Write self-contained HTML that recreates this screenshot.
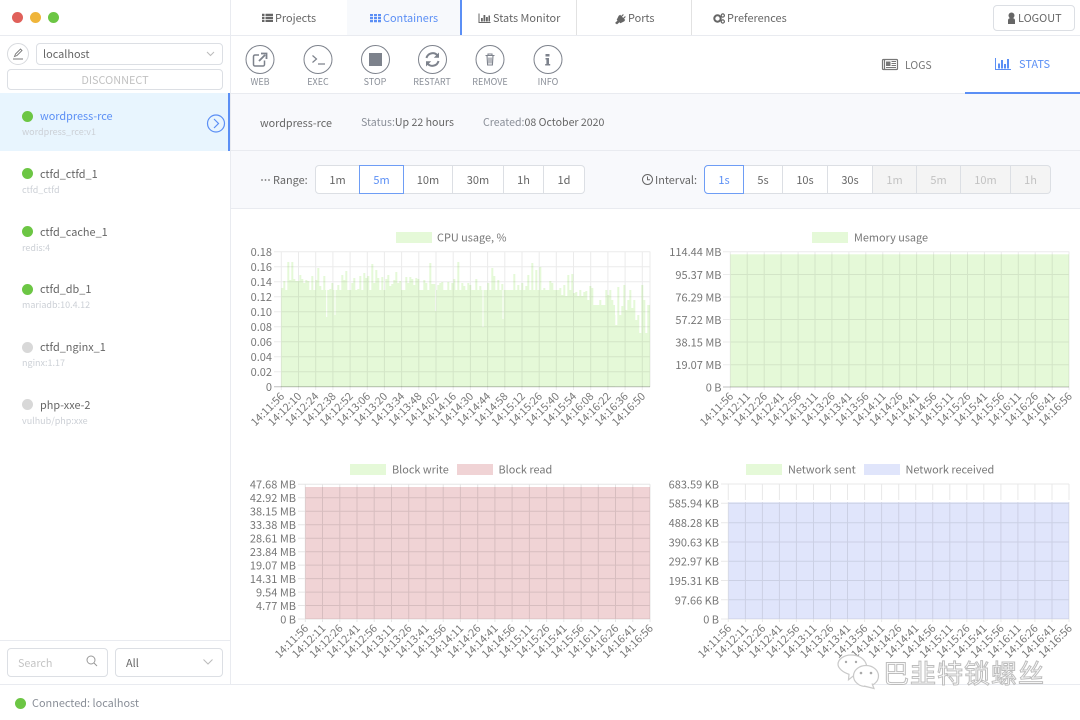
<!DOCTYPE html>
<html lang="en"><head><meta charset="utf-8"><title>Containers</title>
<style>
*{box-sizing:border-box}
html,body{margin:0;padding:0;width:1080px;height:720px;overflow:hidden;background:#fff}
body{position:relative;font-family:"Noto Sans CJK SC","Liberation Sans",sans-serif;color:#666;font-size:10.9px}
.a{position:absolute}
.t{position:absolute;white-space:nowrap;line-height:20px}
.c{text-align:center}
.l{position:absolute;background:#e9ebf0}
.dot{position:absolute;width:11px;height:11px;border-radius:50%;background:#6cc644}
.off{background:#d8d8d8}
.sub{color:#ccd0d6;font-size:9px}
.nm{color:#666;font-size:10.9px}
.tb{color:#8a8f98;font-size:9px;text-align:center;width:60px}
.box{position:absolute;border:1px solid #dcdfe4;border-radius:4px;background:#fff}
.seg{position:absolute;top:165px;height:29px;background:#fff;border:1px solid #dcdfe4;border-left-width:0;text-align:center;line-height:28px;font-size:11px;color:#666}
.dis{background:#f4f4f4;color:#c2c2c2}
.sel{border:1px solid #6e9df5;color:#5b8ff5;z-index:2}
svg text{font-family:"Noto Sans CJK SC","Liberation Sans",sans-serif}
.y text,.y{font-size:11px;fill:#777;text-anchor:end}
.x text{font-size:10.8px;fill:#777;text-anchor:end}
.lg{font-size:10.9px;fill:#777}
</style></head><body>

<!-- backgrounds -->
<div class="a" style="left:231px;top:94px;width:849px;height:115px;background:#f8f9fc"></div>
<div class="a" style="left:347px;top:0;width:114px;height:35px;background:#f7f9fc"></div>
<div class="a" style="left:0;top:93px;width:230px;height:58px;background:#e8f5fe"></div>
<div class="l" style="left:230px;top:0;width:1px;height:684px"></div>
<div class="l" style="left:0;top:35px;width:1080px;height:1px"></div>
<div class="l" style="left:231px;top:93px;width:849px;height:1px"></div>
<div class="l" style="left:231px;top:150px;width:849px;height:1px"></div>
<div class="l" style="left:231px;top:208px;width:849px;height:1px"></div>
<div class="l" style="left:0;top:640px;width:230px;height:1px"></div>
<div class="l" style="left:0;top:684px;width:1080px;height:1px"></div>
<div class="a" style="left:228px;top:93px;width:2px;height:58px;background:#5b8ff5"></div>
<div class="a" style="left:460px;top:0;width:2px;height:35px;background:#5b8ff5"></div>
<div class="a" style="left:576px;top:0;width:1px;height:35px;background:#e2e2e2"></div>
<div class="a" style="left:691px;top:0;width:1px;height:35px;background:#e2e2e2"></div>
<div class="a" style="left:965px;top:92px;width:115px;height:2px;background:#5b8ff5"></div>

<!-- traffic lights -->
<div class="a" style="left:12px;top:12px;width:11px;height:11px;border-radius:50%;background:#e0605a"></div>
<div class="a" style="left:30px;top:12px;width:11px;height:11px;border-radius:50%;background:#efb53a"></div>
<div class="a" style="left:48px;top:12px;width:11px;height:11px;border-radius:50%;background:#6cc644"></div>

<!-- nav -->
<svg class="a" style="left:0;top:0" width="1080" height="94" fill="#666">
<path d="M262 14h2.500v2.200h-2.500zM262 17h2.500v2.200h-2.500zM262 20h2.500v2.200h-2.500zM265.500 14h7.500v2.200h-7.500zM265.500 17h7.500v2.200h-7.500zM265.500 20h7.500v2.200h-7.500z" transform="translate(0,-.2)"/>
<path fill="#5b8ff5" d="M370 14h3v2.200h-3zM374 14h3v2.200h-3zM378 14h3v2.200h-3zM370 17h3v2.200h-3zM374 17h3v2.200h-3zM378 17h3v2.200h-3zM370 20h3v2.200h-3zM374 20h3v2.200h-3zM378 20h3v2.200h-3z"/>
<path d="M478.500 13.500h1v8.500h11v1h-12zM481 18h1.800v3.500h-1.800zM483.500 15h1.800v6.500h-1.800zM486 17h1.800v4.500h-1.800zM488.500 15.500h1.500v6h-1.500z"/>
<path d="M615 23l2.500-2.500-.8-.8 2-4 1.500-1 1 1.200 1.800-1.800.8.800-1.800 1.800 1.200 1.200 1.800-1.800.8.800-1.800 1.800 1.200 1.200-1 1.500-3.800 1.800-1-1-2.400 2.200z"/>
<circle cx="717.500" cy="18.500" r="3.200" fill="none" stroke="#666" stroke-width="2"/>
<circle cx="722.800" cy="15.500" r="1.600" fill="none" stroke="#666" stroke-width="1.200"/>
<circle cx="722.800" cy="21.500" r="1.600" fill="none" stroke="#666" stroke-width="1.200"/>
<circle cx="1011.500" cy="15.500" r="3"/>
<path d="M1008 24v-3.500c0-2 1.500-2.500 3.500-2.500s3.500.5 3.500 2.500V24z"/>

<!-- LOGS / STATS icons -->
<g fill="none" stroke="#777" stroke-width="1.200"><rect x="882.500" y="59.500" width="15" height="10" rx="1"/><path d="M884.500 59.500v10"/></g>
<rect x="886" y="61.500" width="4.500" height="4.500" fill="#777"/>
<path d="M891.500 61.500h4.500M891.500 63.500h4.500M891.500 65.500h4.500M886 67.500h10" stroke="#777" stroke-width="1"/>
<path fill="#5b8ff5" d="M995 58h1v11h15v1h-16zM998 63.500h2v5h-2zM1001 60h2v8.500h-2zM1004 64h2v4.500h-2zM1007 59h2v9.500h-2z"/>
</svg>
<div class="t" style="left:275px;top:8px">Projects</div>
<div class="t" style="left:383px;top:8px;color:#5b8ff5">Containers</div>
<div class="t" style="left:493px;top:8px">Stats Monitor</div>
<div class="t" style="left:628px;top:8px">Ports</div>
<div class="t" style="left:727px;top:8px">Preferences</div>
<div class="box" style="left:993px;top:5px;width:82px;height:26px;background:none"></div>
<div class="t" style="left:1018px;top:8px">LOGOUT</div>
<div class="t" style="left:905px;top:56px;font-size:10.500px;color:#777">LOGS</div>
<div class="t" style="left:1019px;top:54px;font-size:11px;color:#5b8ff5">STATS</div>

<!-- sidebar top -->
<svg class="a" style="left:0;top:40px" width="230" height="30" fill="none">
<circle cx="18" cy="14" r="10.500" stroke="#d8dade"/>
<path d="M14.500 16.500l1-2.500 5-5 1.500 1.500-5 5z" fill="none" stroke="#777" stroke-width=".9"/>
<path d="M13 19h10" stroke="#777"/>
<path d="M207 12l3.500 3.500L214 12" stroke="#bbb"/>
</svg>
<div class="box" style="left:36px;top:43px;width:187px;height:22px;background:none"></div>
<div class="t" style="left:43px;top:44px">localhost</div>
<div class="box" style="left:7px;top:69px;width:216px;height:21px"></div>
<div class="t c" style="left:7px;top:70px;width:216px;font-size:10.900px;color:#c2c2c2">DISCONNECT</div>

<!-- rows -->
<div class="dot" style="left:22px;top:111px"></div>
<div class="t nm" style="left:40px;top:106px;color:#5b8ff5">wordpress-rce</div>
<div class="t sub" style="left:22px;top:122px">wordpress_rce:v1</div>
<svg class="a" style="left:206px;top:114px" width="20" height="20" fill="none" stroke="#5b8ff5"><circle cx="10" cy="9.500" r="8.500" stroke-width="1.200"/><path d="M8 5l4.500 4.500L8 14" stroke-width="1.200"/></svg>

<div class="dot" style="left:22px;top:168px"></div>
<div class="t nm" style="left:40px;top:164px">ctfd_ctfd_1</div>
<div class="t sub" style="left:22px;top:180px">ctfd_ctfd</div>
<div class="dot" style="left:22px;top:226px"></div>
<div class="t nm" style="left:40px;top:222px">ctfd_cache_1</div>
<div class="t sub" style="left:22px;top:238px">redis:4</div>
<div class="dot" style="left:22px;top:284px"></div>
<div class="t nm" style="left:40px;top:279px">ctfd_db_1</div>
<div class="t sub" style="left:22px;top:295px">mariadb:10.4.12</div>
<div class="dot off" style="left:22px;top:342px"></div>
<div class="t nm" style="left:40px;top:337px">ctfd_nginx_1</div>
<div class="t sub" style="left:22px;top:353px">nginx:1.17</div>
<div class="dot off" style="left:22px;top:399px"></div>
<div class="t nm" style="left:40px;top:395px">php-xxe-2</div>
<div class="t sub" style="left:22px;top:411px">vulhub/php:xxe</div>

<!-- sidebar bottom -->
<div class="box" style="left:7px;top:648px;width:101px;height:29px"></div>
<div class="t" style="left:18px;top:653px;color:#c4c4c4;font-size:10.800px">Search</div>
<svg class="a" style="left:85px;top:654px" width="14" height="14" fill="none" stroke="#999"><circle cx="6" cy="6" r="4"/><path d="M9 9l3 3"/></svg>
<div class="box" style="left:115px;top:648px;width:108px;height:29px"></div>
<div class="t" style="left:126px;top:653px">All</div>
<svg class="a" style="left:202px;top:658px" width="12" height="9" fill="none" stroke="#bbb"><path d="M1.500 1.500L6 6l4.500-4.500"/></svg>
<div class="dot" style="left:14.500px;top:698px"></div>
<div class="t" style="left:32px;top:693px;color:#8a8f98">Connected: localhost</div>

<!-- toolbar -->
<svg class="a" style="left:240px;top:40px" width="340" height="40" fill="none" stroke="#7d828c">
<circle cx="20" cy="19.500" r="14"/><circle cx="78" cy="19.500" r="14"/><circle cx="135.500" cy="19.500" r="14"/><circle cx="192.500" cy="19.500" r="14"/><circle cx="250" cy="19.500" r="14"/><circle cx="308" cy="19.500" r="14"/>
<path d="M24.500 20.500v4a1.500 1.500 0 0 1-1.500 1.500h-8a1.500 1.500 0 0 1-1.500-1.500v-8a1.500 1.500 0 0 1 1.500-1.500h4" stroke-width="1.500"/>
<path d="M19 21l6-6M21 13.500h5.500V19" stroke-width="1.800"/>
<path d="M72.500 15.500l4 3.500-4 3.500M78 24h7" stroke-width="1.200"/>
<rect x="129" y="13" width="13" height="13" fill="#7d828c" stroke="none"/>
<path d="M186.500 18a6.300 6.300 0 0 1 11-2.500M198.500 21a6.300 6.300 0 0 1-11 2.500" stroke-width="2"/>
<path d="M199 12.500v5.200h-5.200zM186 26.500v-5.200h5.200z" fill="#7d828c" stroke="none"/>
<path d="M245.500 15.500h9M247 15.500l.6 9.500h4.800l.6-9.500M248 15.500v-1.500h4v1.500M249 17.500v6M251 17.500v6" stroke-width="1.100"/>
<path d="M305.500 14h4v2.500h-4zM305.500 18h3.500v6h1.200v1.500h-5v-1.500h1.200v-4.500h-.9z" fill="#7d828c" stroke="none"/>
</svg>
<div class="t tb" style="left:230px;top:72px">WEB</div>
<div class="t tb" style="left:288px;top:72px">EXEC</div>
<div class="t tb" style="left:345px;top:72px">STOP</div>
<div class="t tb" style="left:402px;top:72px">RESTART</div>
<div class="t tb" style="left:460px;top:72px">REMOVE</div>
<div class="t tb" style="left:518px;top:72px">INFO</div>

<!-- info bar -->
<div class="t" style="left:260px;top:113px;font-size:10.800px">wordpress-rce</div>
<div class="t" style="left:361px;top:113px;color:#8a8f98;font-size:10.600px">Status:<span style="color:#666">Up 22 hours</span></div>
<div class="t" style="left:483px;top:113px;color:#8a8f98;font-size:10.600px">Created:<span style="color:#666">08 October 2020</span></div>

<!-- range -->
<svg class="a" style="left:260px;top:178px" width="12" height="4" fill="#777"><circle cx="2" cy="2" r=".9"/><circle cx="5.500" cy="2" r=".9"/><circle cx="9" cy="2" r=".9"/></svg>
<div class="t" style="left:273px;top:170px">Range:</div>
<div class="seg" style="left:315px;width:45px;border-left-width:1px;border-radius:4px 0 0 4px">1m</div>
<div class="seg sel" style="left:359px;width:45px">5m</div>
<div class="seg" style="left:404px;width:49px">10m</div>
<div class="seg" style="left:453px;width:51px">30m</div>
<div class="seg" style="left:504px;width:40px">1h</div>
<div class="seg" style="left:544px;width:41px;border-radius:0 4px 4px 0">1d</div>

<svg class="a" style="left:641px;top:173px" width="13" height="13" fill="none" stroke="#666"><circle cx="6.500" cy="6.500" r="5"/><path d="M6.500 3.500v3.200h2.500"/></svg>
<div class="t" style="left:655px;top:170px">Interval:</div>
<div class="seg sel" style="left:704px;width:40px;border-radius:4px 0 0 4px">1s</div>
<div class="seg" style="left:744px;width:39px">5s</div>
<div class="seg" style="left:783px;width:45px">10s</div>
<div class="seg" style="left:828px;width:45px">30s</div>
<div class="seg dis" style="left:873px;width:44px">1m</div>
<div class="seg dis" style="left:917px;width:44px">5m</div>
<div class="seg dis" style="left:961px;width:50px">10m</div>
<div class="seg dis" style="left:1011px;width:40px;border-radius:0 4px 4px 0">1h</div>

<!-- charts -->
<svg class="a" style="left:0;top:0" width="1080" height="720">
<!-- legends -->
<rect x="396" y="232" width="36" height="11" fill="#e5f9d8"/><text class="lg" x="437" y="241.500">CPU usage, %</text>
<rect x="812" y="232" width="36" height="11" fill="#e5f9d8"/><text class="lg" x="854" y="241.500">Memory usage</text>
<rect x="350" y="464" width="36" height="11" fill="#e5f9d8"/><text class="lg" x="392" y="473.500">Block write</text>
<rect x="457" y="464" width="36" height="11" fill="#f0d3d5"/><text class="lg" x="498.500" y="473.500">Block read</text>
<rect x="746" y="464" width="36" height="11" fill="#e5f9d8"/><text class="lg" x="788" y="473.500">Network sent</text>
<rect x="864" y="464" width="36" height="11" fill="#e0e5fb"/><text class="lg" x="905.500" y="473.500">Network received</text>

<!-- CPU fill -->
<path fill="#e5f9d8" d="M281.300 386.700V288h2V281h2V305h2V262h2V280h2V262h2V279h2V281h2V281h2V275h2V279h2V283h2V280h2V281h2V300h2V276h2V293h2V280h2V268h2V286h2V292h2V276h2V295h2V318h2V289h2V283h2V296h2V315h2V285h2V300h2V275h2V280h2V271h2V290h2V305h2V283h2V278h2V292h2V289h2V276h2V297h2V273h2V278h2V276h2V296h2V264h2V283h2V270h2V278h2V290h2V277h2V300h2V279h2V275h2V286h2V284h2V280h2V272h2V283h2V281h2V292h2V300h2V277h2V283h2V277h2V279h2V285h2V278h2V279h2V292h2V298h2V280h2V283h2V300h2V263h2V284h2V284h2V311h2V285h2V283h2V282h2V294h2V299h2V282h2V300h2V283h2V279h2V296h2V262h2V295h2V283h2V286h2V302h2V283h2V285h2V305h2V293h2V279h2V290h2V286h2V290h2V330h2V292h2V283h2V300h2V268h2V276h2V296h2V280h2V294h2V284h2V319h2V303h2V292h2V295h2V298h2V274h2V290h2V285h2V298h2V283h2V305h2V286h2V275h2V300h2V263h2V290h2V270h2V305h2V267h2V293h2V288h2V303h2V300h2V281h2V283h2V290h2V293h2V298h2V288h2V295h2V285h2V300h2V275h2V290h2V274h2V293h2V292h2V296h2V290h2V305h2V292h2V291h2V300h2V286h2V288h2V318h2V310h2V322h2V300h2V306h2V325h2V290h2V295h2V290h2V300h2V315h2V325h2V287h2V315h2V306h2V285h2V310h2V300h2V290h2V308h2V300h2V320h2V315h2V333h2V285h2V300h2V333h2V305h2V305H650V386.700z"/>
<!-- solidify the body of the area so only narrow dips remain -->
<rect x="281.300" y="290" width="279" height="97" fill="#e5f9d8"/>
<rect x="560" y="296" width="25" height="91" fill="#e5f9d8"/>
<rect x="585" y="305" width="30" height="82" fill="#e5f9d8"/>
<path stroke="#fff" d="M326.700 290v27M335 290v25M483 290v37M503 290v29M435.700 290v21"/>
<rect x="730.300" y="254.300" width="338.700" height="132.700" fill="#e5f9d8"/>
<rect x="305.300" y="487" width="344.700" height="132" fill="#f0d3d5"/>
<rect x="728.300" y="502.300" width="340.700" height="116.700" fill="#e0e5fb"/>

<!-- grid CPU -->
<path stroke="rgba(0,0,0,.08)" fill="none" d="M281.300 251.500V390M298.500 251.500V390M315.700 251.500V390M332.900 251.500V390M350.100 251.500V390M367.300 251.500V390M384.400 251.500V390M401.600 251.500V390M418.800 251.500V390M436 251.500V390M453.200 251.500V390M470.400 251.500V390M487.600 251.500V390M504.800 251.500V390M522 251.500V390M539.200 251.500V390M556.300 251.500V390M573.500 251.500V390M590.700 251.500V390M607.900 251.500V390M625.100 251.500V390M642.300 251.500V390M650 251.500V387M274 251.700H650M274 266.700H650M274 281.700H650M274 296.700H650M274 311.700H650M274 326.700H650M274 341.700H650M274 356.700H650M274 371.700H650"/>
<path stroke="rgba(0,0,0,.25)" fill="none" d="M274 386.700H650"/>
<!-- grid Mem -->
<path stroke="rgba(0,0,0,.08)" fill="none" d="M730.300 251.500V390M747.200 251.500V390M764.200 251.500V390M781.100 251.500V390M798.100 251.500V390M815 251.500V390M831.900 251.500V390M848.900 251.500V390M865.800 251.500V390M882.800 251.500V390M899.700 251.500V390M916.600 251.500V390M933.600 251.500V390M950.500 251.500V390M967.500 251.500V390M984.400 251.500V390M1001.300 251.500V390M1018.300 251.500V390M1035.200 251.500V390M1052.200 251.500V390M1069 251.500V390M723 251.700H1069M723 274.500H1069M723 297H1069M723 319.500H1069M723 342H1069M723 364.700H1069"/>
<path stroke="rgba(0,0,0,.25)" fill="none" d="M723 387H1069"/>
<!-- grid Block -->
<path stroke="rgba(0,0,0,.1)" fill="none" d="M305.300 484.300V622M322.500 484.300V622M339.800 484.300V622M357 484.300V622M374.200 484.300V622M391.500 484.300V622M408.700 484.300V622M425.900 484.300V622M443.200 484.300V622M460.400 484.300V622M477.700 484.300V622M494.900 484.300V622M512.100 484.300V622M529.400 484.300V622M546.600 484.300V622M563.800 484.300V622M581.100 484.300V622M598.300 484.300V622M615.500 484.300V622M632.800 484.300V622M650 484.300V622M298 484.300H650M298 497.800H650M298 511.300H650M298 524.700H650M298 538.200H650M298 551.700H650M298 565.100H650M298 578.600H650M298 592.100H650M298 605.500H650M298 619H650"/>
<!-- grid Net -->
<path stroke="rgba(0,0,0,.09)" fill="none" d="M728.300 484V500M745.400 484V500M762.400 484V500M779.400 484V500M796.400 484V500M813.500 484V500M830.500 484V500M847.500 484V500M864.600 484V500M881.600 484V500M898.700 484V500M915.700 484V500M932.700 484V500M949.800 484V500M966.800 484V500M983.800 484V500M1000.900 484V500M1017.900 484V500M1034.900 484V500M1052 484V500M1069 484V500M728.300 502V622M745.400 502V622M762.400 502V622M779.400 502V622M796.400 502V622M813.500 502V622M830.500 502V622M847.500 502V622M864.600 502V622M881.600 502V622M898.700 502V622M915.700 502V622M932.700 502V622M949.800 502V622M966.800 502V622M983.800 502V622M1000.900 502V622M1017.900 502V622M1034.900 502V622M1052 502V622M1069 502V622M721 484H1069M721 522.700H1069M721 542H1069M721 561.300H1069M721 580.500H1069M721 599.800H1069M721 619H1069M721 503.300H1069"/>

<!-- Y labels -->
<g class="y">
<text x="272" y="256">0.18</text><text x="272" y="271">0.16</text><text x="272" y="286">0.14</text><text x="272" y="301">0.12</text><text x="272" y="316">0.10</text><text x="272" y="331">0.08</text><text x="272" y="346">0.06</text><text x="272" y="361">0.04</text><text x="272" y="376">0.02</text><text x="272" y="391">0</text>
<text x="721.500" y="256">114.44 MB</text><text x="721.500" y="279">95.37 MB</text><text x="721.500" y="301.500">76.29 MB</text><text x="721.500" y="324">57.22 MB</text><text x="721.500" y="346.500">38.15 MB</text><text x="721.500" y="369">19.07 MB</text><text x="721.500" y="391.500">0 B</text>
<text x="296" y="488.500">47.68 MB</text><text x="296" y="502">42.92 MB</text><text x="296" y="515.500">38.15 MB</text><text x="296" y="529">33.38 MB</text><text x="296" y="542.500">28.61 MB</text><text x="296" y="556">23.84 MB</text><text x="296" y="569.500">19.07 MB</text><text x="296" y="583">14.31 MB</text><text x="296" y="596.500">9.54 MB</text><text x="296" y="610">4.77 MB</text><text x="296" y="623.500">0 B</text>
<text x="719" y="488.500">683.59 KB</text><text x="719" y="507.500">585.94 KB</text><text x="719" y="527">488.28 KB</text><text x="719" y="546.500">390.63 KB</text><text x="719" y="565.500">292.97 KB</text><text x="719" y="585">195.31 KB</text><text x="719" y="604.500">97.66 KB</text><text x="719" y="623.500">0 B</text>
</g>

<!-- X labels -->
<g class="x">
<text transform="translate(285,397) rotate(-45)">14:11:56</text>
<text transform="translate(302.200,397) rotate(-45)">14:12:10</text>
<text transform="translate(319.400,397) rotate(-45)">14:12:24</text>
<text transform="translate(336.600,397) rotate(-45)">14:12:38</text>
<text transform="translate(353.800,397) rotate(-45)">14:12:52</text>
<text transform="translate(371,397) rotate(-45)">14:13:06</text>
<text transform="translate(388.100,397) rotate(-45)">14:13:20</text>
<text transform="translate(405.300,397) rotate(-45)">14:13:34</text>
<text transform="translate(422.500,397) rotate(-45)">14:13:48</text>
<text transform="translate(439.700,397) rotate(-45)">14:14:02</text>
<text transform="translate(456.900,397) rotate(-45)">14:14:16</text>
<text transform="translate(474.100,397) rotate(-45)">14:14:30</text>
<text transform="translate(491.300,397) rotate(-45)">14:14:44</text>
<text transform="translate(508.500,397) rotate(-45)">14:14:58</text>
<text transform="translate(525.700,397) rotate(-45)">14:15:12</text>
<text transform="translate(542.900,397) rotate(-45)">14:15:26</text>
<text transform="translate(560,397) rotate(-45)">14:15:40</text>
<text transform="translate(577.200,397) rotate(-45)">14:15:54</text>
<text transform="translate(594.400,397) rotate(-45)">14:16:08</text>
<text transform="translate(611.600,397) rotate(-45)">14:16:22</text>
<text transform="translate(628.800,397) rotate(-45)">14:16:36</text>
<text transform="translate(646,397) rotate(-45)">14:16:50</text>

<text transform="translate(734,397) rotate(-45)">14:11:56</text>
<text transform="translate(750.900,397) rotate(-45)">14:12:11</text>
<text transform="translate(767.900,397) rotate(-45)">14:12:26</text>
<text transform="translate(784.800,397) rotate(-45)">14:12:41</text>
<text transform="translate(801.800,397) rotate(-45)">14:12:56</text>
<text transform="translate(818.700,397) rotate(-45)">14:13:11</text>
<text transform="translate(835.600,397) rotate(-45)">14:13:26</text>
<text transform="translate(852.600,397) rotate(-45)">14:13:41</text>
<text transform="translate(869.500,397) rotate(-45)">14:13:56</text>
<text transform="translate(886.500,397) rotate(-45)">14:14:11</text>
<text transform="translate(903.400,397) rotate(-45)">14:14:26</text>
<text transform="translate(920.300,397) rotate(-45)">14:14:41</text>
<text transform="translate(937.300,397) rotate(-45)">14:14:56</text>
<text transform="translate(954.200,397) rotate(-45)">14:15:11</text>
<text transform="translate(971.200,397) rotate(-45)">14:15:26</text>
<text transform="translate(988.100,397) rotate(-45)">14:15:41</text>
<text transform="translate(1005,397) rotate(-45)">14:15:56</text>
<text transform="translate(1022,397) rotate(-45)">14:16:11</text>
<text transform="translate(1038.900,397) rotate(-45)">14:16:26</text>
<text transform="translate(1055.900,397) rotate(-45)">14:16:41</text>
<text transform="translate(1072.700,397) rotate(-45)">14:16:56</text>

<text transform="translate(309,629) rotate(-45)">14:11:56</text>
<text transform="translate(326.200,629) rotate(-45)">14:12:11</text>
<text transform="translate(343.500,629) rotate(-45)">14:12:26</text>
<text transform="translate(360.700,629) rotate(-45)">14:12:41</text>
<text transform="translate(377.900,629) rotate(-45)">14:12:56</text>
<text transform="translate(395.200,629) rotate(-45)">14:13:11</text>
<text transform="translate(412.400,629) rotate(-45)">14:13:26</text>
<text transform="translate(429.600,629) rotate(-45)">14:13:41</text>
<text transform="translate(446.900,629) rotate(-45)">14:13:56</text>
<text transform="translate(464.100,629) rotate(-45)">14:14:11</text>
<text transform="translate(481.400,629) rotate(-45)">14:14:26</text>
<text transform="translate(498.600,629) rotate(-45)">14:14:41</text>
<text transform="translate(515.800,629) rotate(-45)">14:14:56</text>
<text transform="translate(533.100,629) rotate(-45)">14:15:11</text>
<text transform="translate(550.300,629) rotate(-45)">14:15:26</text>
<text transform="translate(567.500,629) rotate(-45)">14:15:41</text>
<text transform="translate(584.800,629) rotate(-45)">14:15:56</text>
<text transform="translate(602,629) rotate(-45)">14:16:11</text>
<text transform="translate(619.200,629) rotate(-45)">14:16:26</text>
<text transform="translate(636.500,629) rotate(-45)">14:16:41</text>
<text transform="translate(653.700,629) rotate(-45)">14:16:56</text>

<text transform="translate(732,629) rotate(-45)">14:11:56</text>
<text transform="translate(749.100,629) rotate(-45)">14:12:11</text>
<text transform="translate(766.100,629) rotate(-45)">14:12:26</text>
<text transform="translate(783.100,629) rotate(-45)">14:12:41</text>
<text transform="translate(800.100,629) rotate(-45)">14:12:56</text>
<text transform="translate(817.200,629) rotate(-45)">14:13:11</text>
<text transform="translate(834.200,629) rotate(-45)">14:13:26</text>
<text transform="translate(851.200,629) rotate(-45)">14:13:41</text>
<text transform="translate(868.300,629) rotate(-45)">14:13:56</text>
<text transform="translate(885.300,629) rotate(-45)">14:14:11</text>
<text transform="translate(902.400,629) rotate(-45)">14:14:26</text>
<text transform="translate(919.400,629) rotate(-45)">14:14:41</text>
<text transform="translate(936.400,629) rotate(-45)">14:14:56</text>
<text transform="translate(953.500,629) rotate(-45)">14:15:11</text>
<text transform="translate(970.500,629) rotate(-45)">14:15:26</text>
<text transform="translate(987.500,629) rotate(-45)">14:15:41</text>
<text transform="translate(1004.600,629) rotate(-45)">14:15:56</text>
<text transform="translate(1021.600,629) rotate(-45)">14:16:11</text>
<text transform="translate(1038.600,629) rotate(-45)">14:16:26</text>
<text transform="translate(1055.700,629) rotate(-45)">14:16:41</text>
<text transform="translate(1072.700,629) rotate(-45)">14:16:56</text>
</g>

<!-- watermark -->
<g fill="#fff" stroke="#c9c9c9" stroke-width="1.200">
<path d="M851 655c8 0 14 4 15.500 10l-10 10-3 .8-5 4 .5-5.500c-6-2-11-6-11-10 0-5 6-9.300 13-9.300z"/>
<ellipse cx="866" cy="676" rx="12.500" ry="10.500"/>
<path d="M864 686l10 2.500-2-5" />
</g>
<g fill="#aaa"><circle cx="861" cy="673" r="1.300"/><circle cx="871" cy="673" r="1.300"/><circle cx="846" cy="662" r="1.200"/><circle cx="856" cy="662" r="1.200"/></g>
<text x="883" y="683" font-size="26" fill="#fff" stroke="#bdbdbd" stroke-width="1" style="letter-spacing:1px;font-family:'Liberation Sans','Noto Sans CJK SC',sans-serif">巴韭特锁螺丝</text>
</svg>
</body></html>
